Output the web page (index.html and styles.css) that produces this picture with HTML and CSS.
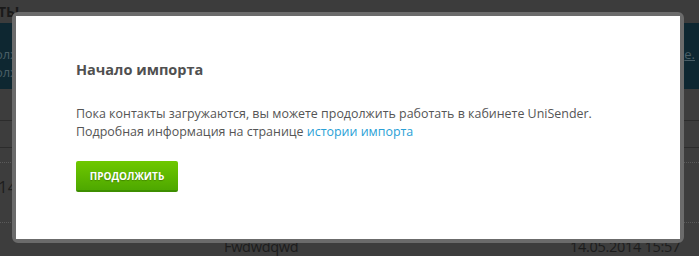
FILE: index.html
```html
<!DOCTYPE html>
<html lang="ru">
<head>
<meta charset="utf-8">
<title>Начало импорта</title>
<link rel="stylesheet" href="styles.css">
</head>
<body>
<div class="page">
  <div class="topbar"><span class="topbar-text">ТЬ!</span></div>
  <div class="band">
    <div class="band-left">
      <div>олж</div>
      <div>олж</div>
    </div>
    <div class="band-right"><span class="u">е.</span></div>
  </div>
  <div class="rows">
    <div class="row r1"></div>
    <div class="row r2"></div>
    <div class="row r3"><span class="num">14</span></div>
    <div class="row r4">
      <span class="name">Fwdwdqwd</span>
      <span class="date">14.05.2014 15:57</span>
    </div>
  </div>
</div>

<div class="modal">
  <div class="modal-inner">
    <h2 class="title">Начало импорта</h2>
    <p class="text">Пока контакты загружаются, вы можете продолжить работать в кабинете UniSender.<br>Подробная информация на странице <a class="link" href="#">истории импорта</a></p>
    <button class="btn" type="button">Продолжить</button>
  </div>
</div>
</body>
</html>
```

FILE: styles.css
```css
html, body {
  margin: 0;
  padding: 0;
}
body {
  width: 699px;
  height: 256px;
  overflow: hidden;
  background: #3d3d3d;
  font-family: "Open Sans", "Noto Sans", sans-serif;
  position: relative;
}
.page {
  display: flex;
  flex-direction: column;
  height: 256px;
}
.topbar {
  height: 29px;
  background: #3c3c3c;
  color: #1a1a1a;
  font-weight: bold;
  font-size: 14px;
  line-height: 14px;
  padding-top: 5px;
  box-sizing: border-box;
}
.topbar-text {
  margin-left: -2px;
}
.band {
  height: 80px;
  background: #0e2731;
  display: flex;
  justify-content: space-between;
  color: #4a5e66;
  font-size: 13px;
  box-sizing: border-box;
  padding-top: 22px;
}
.band-left {
  margin-left: -5px;
  line-height: 18px;
}
.band-right {
  margin-right: 4px;
  line-height: 18px;
}
.u {
  text-decoration: underline;
}
.rows {
  flex: 1;
  display: flex;
  flex-direction: column;
}
.row {
  box-sizing: border-box;
}
.r1 {
  height: 32px;
  border-bottom: 1px solid #2c2c2c;
}
.r2 {
  height: 27px;
  border-bottom: 1px solid #2c2c2c;
}
.r3 {
  height: 61px;
  border-top: 1px dotted #5a5a5a;
  margin-top: 14px;
  border-bottom: 1px dotted #5a5a5a;
}
.num {
  display: block;
  margin-top: 12px;
  margin-left: -2px;
  font-size: 17px;
  color: #1e1e1e;
}
.r4 {
  display: flex;
  justify-content: space-between;
  padding-left: 224px;
  padding-right: 19px;
  font-size: 14.5px;
  letter-spacing: -0.3px;
  color: #1c1c1c;
  line-height: 18px;
  padding-top: 15px;
}
.modal {
  position: absolute;
  left: 12px;
  top: 12px;
  width: 672px;
  height: 231px;
  box-sizing: border-box;
  border: 4px solid #6b6b6b;
  border-radius: 6px;
  background: #6b6b6b;
}
.modal-inner {
  background: #ffffff;
  height: 100%;
  box-sizing: border-box;
  padding: 44px 60px 0 60px;
}
.title {
  margin: 0;
  font-size: 14.5px;
  line-height: 20px;
  font-weight: bold;
  color: #505050;
}
.text {
  margin: 25px 0 0 0;
  font-size: 12.45px;
  line-height: 17.5px;
  color: #555555;
}
.link {
  color: #2a9fd6;
  text-decoration: none;
}
.btn {
  margin-top: 21px;
  width: 102px;
  height: 31px;
  border: 0;
  border-bottom: 2px solid #3e8e00;
  border-radius: 2px;
  background: linear-gradient(#6fc800, #4ea800);
  color: #ffffff;
  font-family: "Open Sans", "Noto Sans", sans-serif;
  font-weight: bold;
  font-size: 10px;
  text-transform: uppercase;
  text-shadow: 0 1px 1px rgba(0,0,0,0.25);
  padding: 0;
  cursor: pointer;
}
```
